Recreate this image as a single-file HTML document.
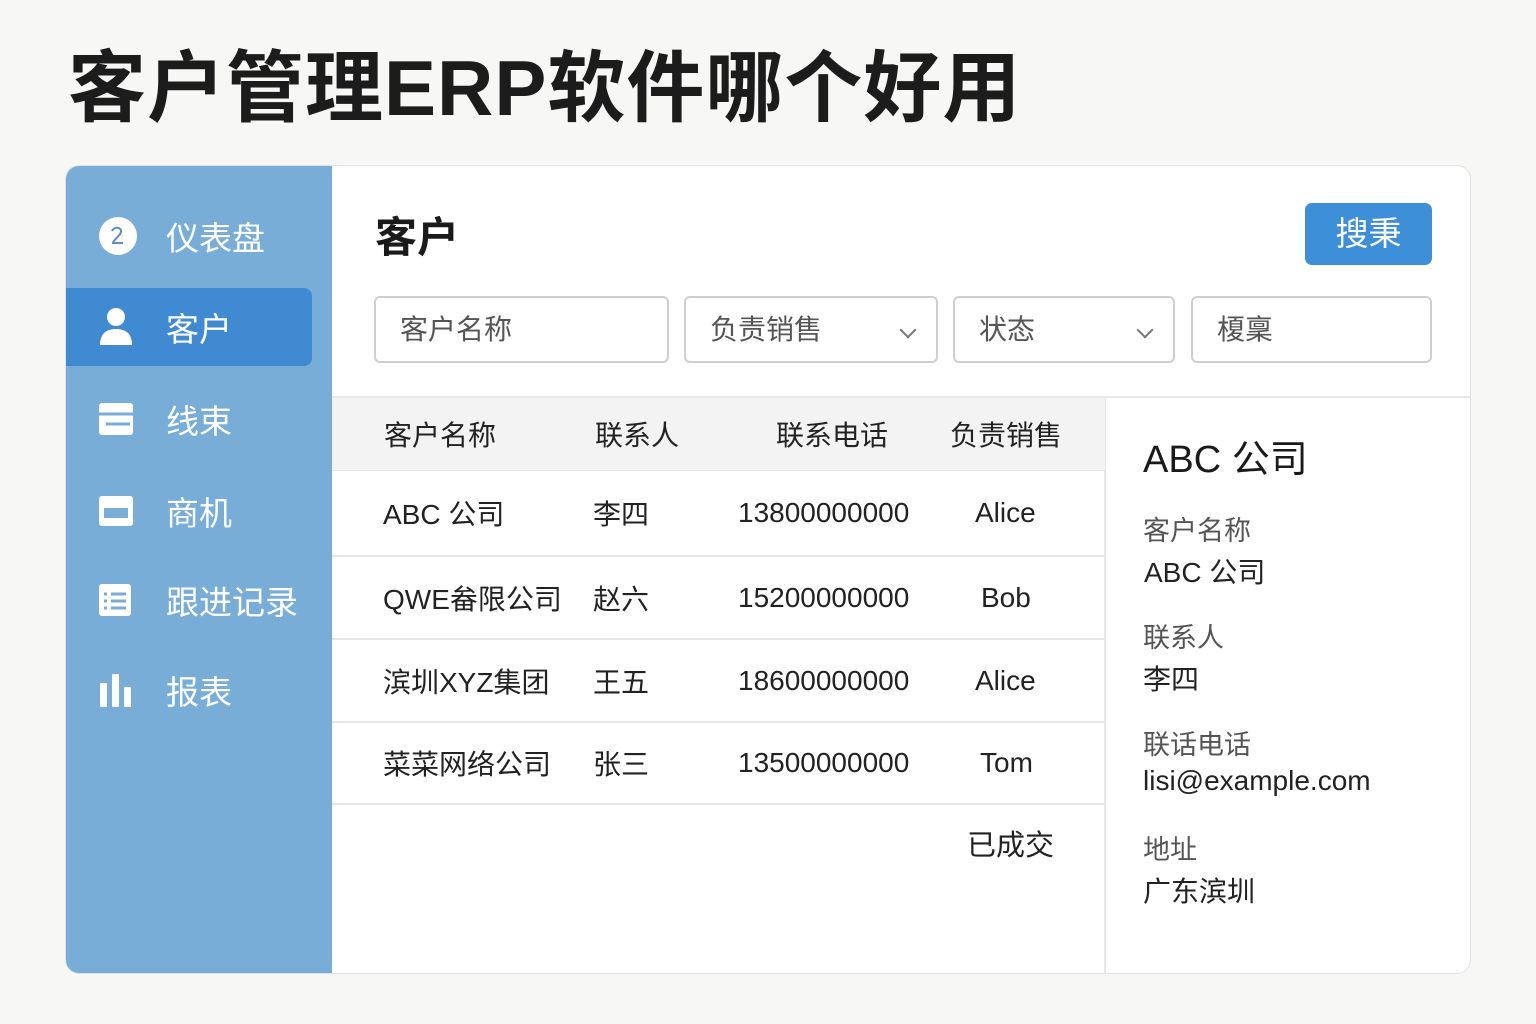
<!DOCTYPE html>
<html><head><meta charset="utf-8"><style>
*{margin:0;padding:0;box-sizing:border-box}
body{width:1536px;height:1024px;background:#f7f7f6;font-family:"Liberation Sans","Noto Sans CJK SC",sans-serif;color:#222;position:relative;overflow:hidden}
.a{position:absolute;white-space:nowrap}
h1{position:absolute;left:68px;top:40px;font-size:78px;font-weight:700;color:#1c1c1c;letter-spacing:1px;line-height:96px}
.card{position:absolute;left:65px;top:165px;width:1406px;height:809px;background:#fff;border:1px solid #e2e2e2;border-radius:14px;overflow:hidden}
.side{position:absolute;left:0;top:0;width:266px;height:809px;background:#77add6}
.nav{position:absolute;left:0;width:246px;height:78px;color:#fff;font-size:33px}
.nav span{position:absolute;left:100px;top:50%;transform:translateY(-50%)}
.nav svg{position:absolute;left:32px;top:50%;transform:translateY(-50%)}
.act{background:#3f8ad1;border-radius:0 8px 8px 0}
.inp{position:absolute;top:130px;height:67px;border:2px solid #cfcfcf;border-radius:6px;font-size:28px;color:#555;padding-left:24px;line-height:63px}
.chev{position:absolute;right:22px;top:26px;width:12px;height:12px;border-right:2px solid #777;border-bottom:2px solid #777;transform:rotate(45deg)}
.row{position:absolute;left:266px;width:773px;border-bottom:2px solid #e6e6e6;font-size:28px;color:#222}
.row span{position:absolute;top:50%;transform:translateY(-50%)}
.lbl{font-size:27px;color:#555}
.val{font-size:28px;color:#222}
</style></head><body>
<h1>客户管理ERP软件哪个好用</h1>
<div class="card">
 <div class="side">
  <div class="nav" style="top:31px"><svg width="40" height="40" viewBox="0 0 40 40"><circle cx="20" cy="20" r="19" fill="#fff"/><path d="M14 15c2-5 10-4 9 1-1 4-7 7-8 11h10" stroke="#5a8fc0" stroke-width="2" fill="none"/></svg><span>仪表盘</span></div>
  <div class="nav act" style="top:122px"><svg width="36" height="40" viewBox="0 0 36 40"><circle cx="18" cy="10" r="9" fill="#fff"/><path d="M2 38c0-12 7-16 16-16s16 4 16 16z" fill="#fff"/></svg><span>客户</span></div>
  <div class="nav" style="top:214px"><svg width="36" height="34" viewBox="0 0 36 34"><rect x="1" y="1" width="34" height="32" rx="3" fill="#fff"/><path d="M1 12h34M8 22h24" stroke="#77add6" stroke-width="3"/></svg><span>线束</span></div>
  <div class="nav" style="top:306px"><svg width="36" height="32" viewBox="0 0 36 32"><rect x="1" y="1" width="34" height="30" rx="3" fill="#fff"/><rect x="6" y="13" width="24" height="10" fill="#77add6"/></svg><span>商机</span></div>
  <div class="nav" style="top:395px"><svg width="34" height="34" viewBox="0 0 34 34"><rect x="1" y="1" width="32" height="32" rx="3" fill="#fff"/><path d="M6 11h3M13 11h15M6 18h3M13 18h15M6 25h3M13 25h15" stroke="#77add6" stroke-width="3"/></svg><span>跟进记录</span></div>
  <div class="nav" style="top:485px"><svg width="36" height="34" viewBox="0 0 36 34"><rect x="2" y="10" width="7" height="24" rx="1" fill="#fff"/><rect x="14" y="1" width="7" height="33" rx="1" fill="#fff"/><rect x="26" y="14" width="7" height="20" rx="1" fill="#fff"/></svg><span>报表</span></div>
 </div>
 <div class="a" style="left:309px;top:38px;font-size:42px;font-weight:700;color:#1a1a1a">客户</div>
 <div class="a" style="left:1239px;top:37px;width:127px;height:62px;background:#3d8fd7;border-radius:7px;color:#fff;font-size:33px;text-align:center;line-height:62px">搜秉</div>
 <div class="inp" style="left:308px;width:295px">客户名称</div>
 <div class="inp" style="left:618px;width:254px">负责销售<div class="chev"></div></div>
 <div class="inp" style="left:887px;width:222px">状态<div class="chev"></div></div>
 <div class="inp" style="left:1125px;width:241px">榎稟</div>
 <div class="a" style="left:266px;top:230px;width:1140px;border-top:2px solid #e8e8e8"></div>
 <div class="a" style="left:1038px;top:231px;height:578px;border-left:2px solid #e8e8e8"></div>
 <div class="row" style="top:232px;height:73px;background:#f3f3f3;border-bottom:1px solid #e6e6e6;font-size:28px">
  <span style="left:52px">客户名称</span><span style="left:263px">联系人</span><span style="left:444px">联系电话</span><span style="left:618px">负责销售</span></div>
 <div class="row" style="top:305px;height:86px"><span style="left:51px">ABC 公司</span><span style="left:261px">李四</span><span style="left:406px">13800000000</span><span style="left:643px">Alice</span></div>
 <div class="row" style="top:391px;height:83px"><span style="left:51px">QWE畚限公司</span><span style="left:261px">赵六</span><span style="left:406px">15200000000</span><span style="left:649px">Bob</span></div>
 <div class="row" style="top:474px;height:83px"><span style="left:51px">滨圳XYZ集团</span><span style="left:261px">王五</span><span style="left:406px">18600000000</span><span style="left:643px">Alice</span></div>
 <div class="row" style="top:557px;height:82px"><span style="left:51px">菜菜网络公司</span><span style="left:261px">张三</span><span style="left:406px">13500000000</span><span style="left:648px">Tom</span></div>
 <div class="a" style="left:901px;top:656px;font-size:29px">已成交</div>
 <div class="a" style="left:1077px;top:262px;font-size:38px;color:#1a1a1a">ABC 公司</div>
 <div class="a lbl" style="left:1077px;top:343px">客户名称</div>
 <div class="a val" style="left:1078px;top:385px">ABC 公司</div>
 <div class="a lbl" style="left:1077px;top:450px">联系人</div>
 <div class="a val" style="left:1077px;top:492px">李四</div>
 <div class="a lbl" style="left:1077px;top:557px">联话电话</div>
 <div class="a val" style="left:1077px;top:599px">lisi@example.com</div>
 <div class="a lbl" style="left:1077px;top:662px">地址</div>
 <div class="a val" style="left:1077px;top:704px">广东滨圳</div>
</div>
</body></html>
